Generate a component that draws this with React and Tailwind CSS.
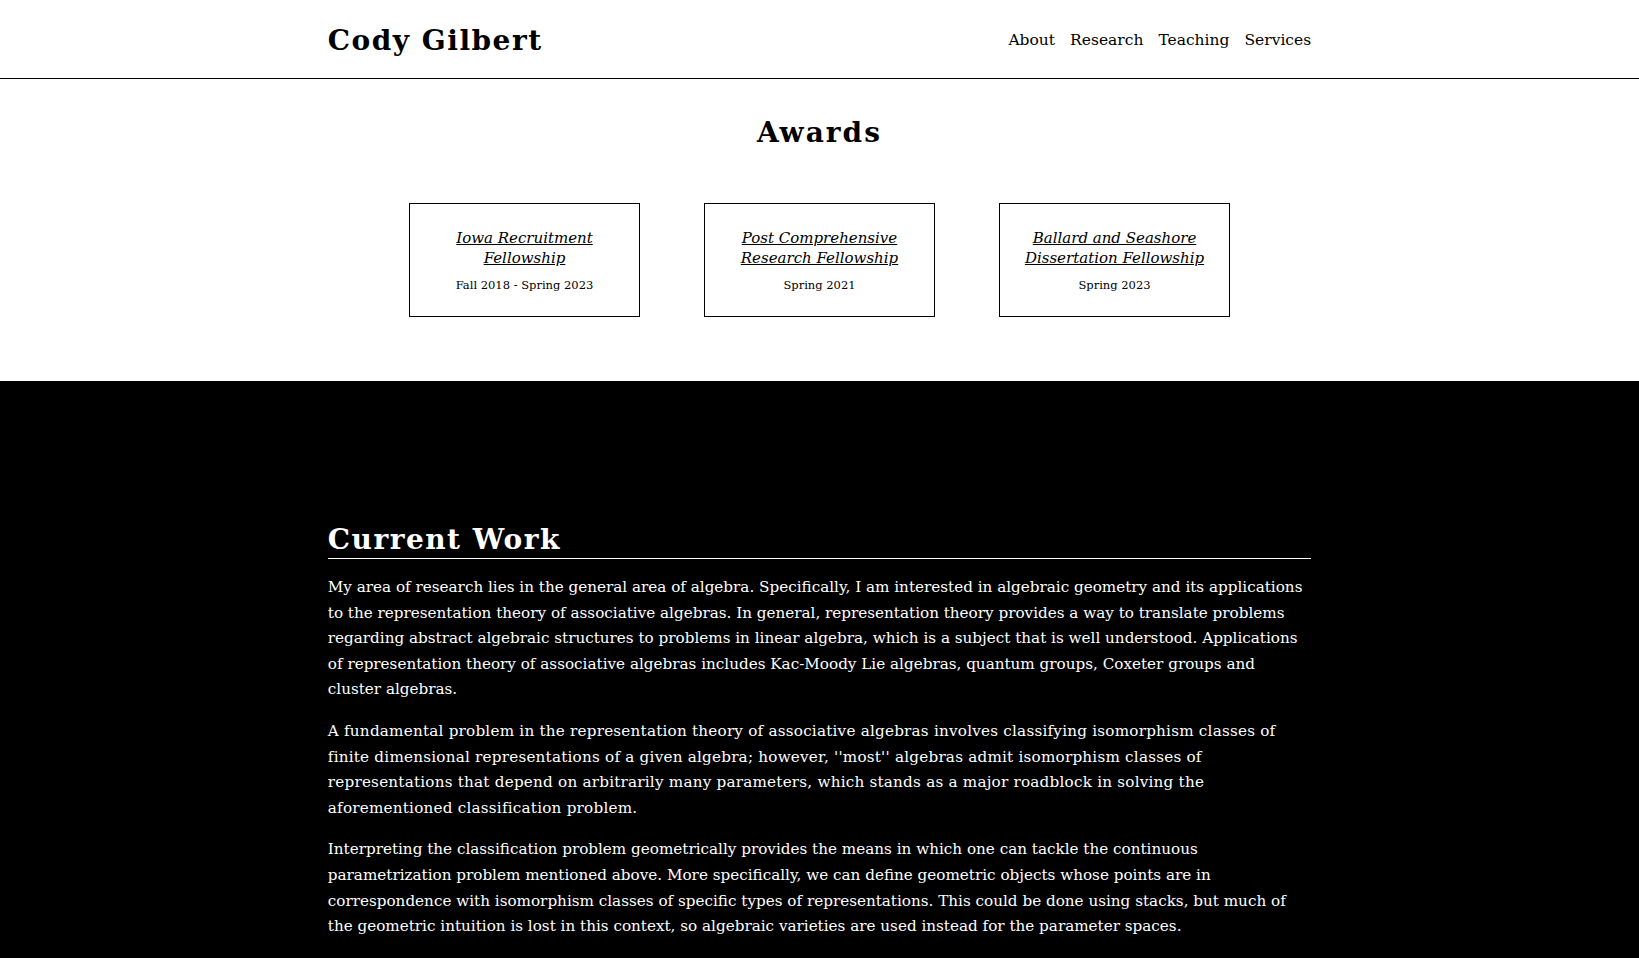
const AWARDS = [
  { title: "Iowa Recruitment Fellowship", date: "Fall 2018 - Spring 2023" },
  { title: "Post Comprehensive Research Fellowship", date: "Spring 2021" },
  { title: "Ballard and Seashore Dissertation Fellowship", date: "Spring 2023" },
];

const NAV = ["About", "Research", "Teaching", "Services"];

export default function App() {
  return (
    <div className="min-h-screen bg-white text-black font-['DejaVu_Serif',serif]">
      <header className="border-b border-black">
        <div className="w-[60%] mx-auto h-[78px] flex items-center justify-between">
          <h1 className="text-[28px] font-bold tracking-[1.5px] pt-1">Cody Gilbert</h1>
          <nav className="flex items-center gap-[15px] text-[15.5px] pt-1">
            {NAV.map((n) => (
              <a key={n} href="#" className="text-black">
                {n}
              </a>
            ))}
          </nav>
        </div>
      </header>

      <section className="pt-[32px] pb-16">
        <h2 className="text-center text-[28px] font-bold tracking-[2px] leading-[44px]">Awards</h2>
        <div className="flex justify-center gap-16 mt-[48px]">
          {AWARDS.map((a) => (
            <div
              key={a.title}
              className="w-[231px] h-[114px] border border-black flex flex-col items-center justify-center px-5 text-center"
            >
              <a href="#" className="italic underline text-[15px] leading-[20px] mt-[2px]">
                {a.title}
              </a>
              <p className="text-[11.5px] mt-[9px]">{a.date}</p>
            </div>
          ))}
        </div>
      </section>

      <section className="bg-black text-white pt-[141px] pb-10">
        <div className="w-[60%] mx-auto">
          <h2 className="text-[28px] font-bold tracking-[1.5px] leading-[36px] border-b border-white">
            Current Work
          </h2>
          <div className="text-[15.2px] leading-[25.6px] mt-[16px] space-y-4">
            <p>
              My area of research lies in the general area of algebra. Specifically, I am interested in
              algebraic geometry and its applications to the representation theory of associative algebras.
              In general, representation theory provides a way to translate problems regarding abstract
              algebraic structures to problems in linear algebra, which is a subject that is well understood.
              Applications of representation theory of associative algebras includes Kac-Moody Lie algebras,
              quantum groups, Coxeter groups and cluster algebras.
            </p>
            <p className="tracking-[0.22px]">
              A fundamental problem in the representation theory of associative algebras involves classifying
              isomorphism classes of finite dimensional representations of a given algebra; however, ''most''
              algebras admit isomorphism classes of representations that depend on arbitrarily many parameters,
              which stands as a major roadblock in solving the aforementioned classification problem.
            </p>
            <p>
              Interpreting the classification problem geometrically provides the means in which one can tackle
              the continuous parametrization problem mentioned above. More specifically, we can define geometric
              objects whose points are in correspondence with isomorphism classes of specific types of
              representations. This could be done using stacks, but much of the geometric intuition is lost in
              this context, so algebraic varieties are used instead for the parameter spaces.
            </p>
          </div>
        </div>
      </section>
    </div>
  );
}
